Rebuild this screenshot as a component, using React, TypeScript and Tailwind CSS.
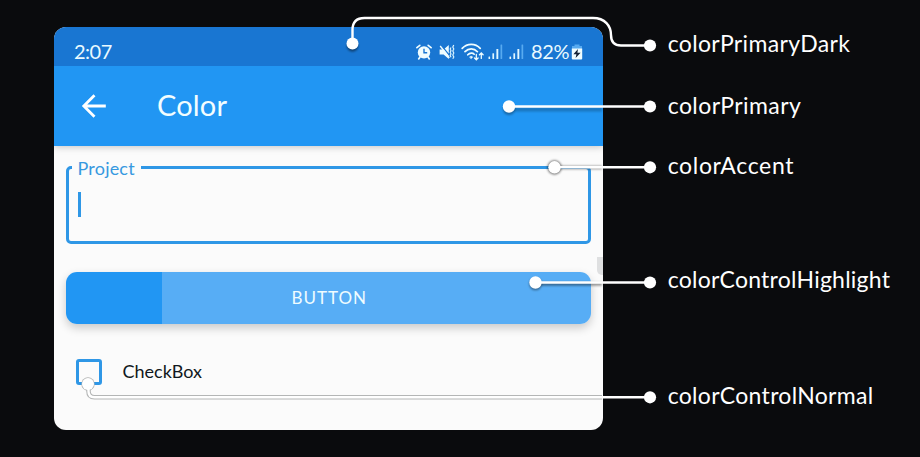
import React from "react";

const labels = [
  { text: "colorPrimaryDark", className: "mt-7 tracking-[0.35px]" },
  { text: "colorPrimary", className: "mt-[31.6px] tracking-[0.42px]" },
  { text: "colorAccent", className: "mt-[30.6px] tracking-[0.65px]" },
  { text: "colorControlHighlight", className: "mt-[83.8px] tracking-[0.24px]" },
  { text: "colorControlNormal", className: "mt-[85.6px] tracking-[0.3px]" },
];

function AlarmIcon() {
  return (
    <svg className="h-4 w-4 shrink-0" viewBox="0 0 16 16" fill="none" stroke="#eefcff">
      <circle cx="8" cy="8.4" r="6.2" fill="#eefcff" stroke="none" />
      <path d="M.9 3.6 3.8 1.3M15.1 3.6 12.2 1.3M4 13l-1.3 1.9M12 13l1.3 1.9" strokeWidth="1.7" strokeLinecap="round" />
      <path d="M8 4.8v4h3.2" stroke="#1976d2" strokeWidth="1.4" />
    </svg>
  );
}

function MuteIcon() {
  return (
    <svg className="ml-[7px] h-4 w-4 shrink-0" viewBox="0 0 16 16" fill="none">
      <path d="M.6 5.4h4L9.8 1v14L4.6 10.6h-4z" fill="#eefcff" />
      <path d="M2.4 1.4 11 12" stroke="#1976d2" strokeWidth="1.2" />
      <path d="M1.2 2 10.4 13.9" stroke="#eefcff" strokeWidth="1.4" />
      <path d="m12 3.4-.8 1.6.8 1.7-.8 1.6.8 1.7-.8 1.6.8 1.6M14.8 1l-1 2 1 2-1 2 1 2-1 2 1 2-1 1.7" stroke="#d9f3ff" strokeWidth="1.2" />
    </svg>
  );
}

function WifiIcon() {
  return (
    <svg className="ml-[6px] h-[18px] w-[23px] shrink-0" viewBox="0 0 23 18" fill="none" stroke="#eefcff" strokeLinecap="round">
      <path d="M1.2 5.4c5-5.3 13.2-5.3 18 0M4 8.7c3.5-3.8 9-3.8 12.4 0M6.8 11.8c2-2.2 5-2.2 6.4-.6" strokeWidth="1.7" />
      <path d="M8.8 13.9c.9-.8 1.9-.8 2.8 0l-1.2 1.5z" fill="#eefcff" strokeWidth=".7" />
      <path d="M15.3 11.4v5.4M13.5 15l1.8 1.8 1.8-1.8M20.3 15.4V10M18.5 11.8l1.8-1.8 1.8 1.8" strokeWidth="1.3" />
    </svg>
  );
}

function SignalIcon({ className }: { className: string }) {
  return (
    <svg className={`h-4 w-[15px] shrink-0 ${className}`} viewBox="0 0 15 16" fill="#e2f7ff">
      <rect x=".5" y="12.4" width="1.6" height="2.6" rx=".5" />
      <rect x="4.4" y="9.3" width="1.7" height="5.7" rx=".5" />
      <rect x="8.4" y="5" width="1.9" height="10" rx=".5" />
      <rect x="12.5" y=".6" width="1.7" height="14.4" rx=".5" fill="#57aaf0" />
    </svg>
  );
}

function BatteryIcon() {
  return (
    <svg className="ml-[2px] h-4 w-3 shrink-0" viewBox="0 0 12 16">
      <path d="M3.5.4h5V2H11v4H1V2h2.5z" fill="#57aaf0" />
      <path d="M.8 4.4h10.4v10.1a1 1 0 0 1-1 1H1.8a1 1 0 0 1-1-1z" fill="#eefcff" />
      <path d="M7 5 2.4 10.2h3L4.6 14l5-5.2H6.4z" fill="#152235" />
    </svg>
  );
}

function Connectors() {
  return (
    <svg className="pointer-events-none absolute inset-0 z-20" width="920" height="457" viewBox="0 0 920 457" fill="none">
      <defs>
        <filter id="soft" x="0" y="0" width="920" height="457" filterUnits="userSpaceOnUse">
          <feGaussianBlur stdDeviation="1.2" />
        </filter>
      </defs>
      <g filter="url(#soft)">
        <path d="M513 109.5H602" stroke="#000" strokeOpacity=".22" strokeWidth="4" />
        <circle cx="352.5" cy="46" r="5.8" fill="#000" fillOpacity=".45" />
        <circle cx="509" cy="109" r="6" fill="#000" fillOpacity=".32" />
        <path d="M555 167.5H602M536 284H602" stroke="#000" strokeOpacity=".4" strokeWidth="3.5" />
        <circle cx="554.5" cy="167.5" r="7.2" fill="#000" fillOpacity=".5" />
        <circle cx="535.5" cy="284" r="6.3" fill="#000" fillOpacity=".4" />
      </g>
      <path d="M88.5 390v1.3q0 6 6 6H602" stroke="#b4b6b6" strokeWidth="4.6" />
      <circle cx="88" cy="384" r="6.7" fill="#b0b2b2" />
      <g stroke="#fff" strokeWidth="2.4">
        <path d="M352.5 43V30q0-12 12-12H593C605 18 611 26 611 35C611 42 614 45.5 621 45.5H650" />
        <path d="M509 106.5H650M555 167.3H650M536 282.5H650" />
        <path d="M88.5 386v5.3q0 6 6 6H650" />
      </g>
      <g fill="#fff">
        <circle cx="352.5" cy="43.5" r="6" />
        <circle cx="509" cy="106.5" r="6.2" />
        <circle cx="554.5" cy="167.3" r="6.2" />
        <circle cx="535.5" cy="282.5" r="6.2" />
        <circle cx="88" cy="384" r="6" />
        <circle cx="650" cy="45.5" r="6.1" />
        <circle cx="650" cy="106.5" r="6.1" />
        <circle cx="650" cy="167.3" r="6.1" />
        <circle cx="650" cy="282.5" r="6.1" />
        <circle cx="650" cy="397.3" r="6.1" />
      </g>
    </svg>
  );
}

export default function App() {
  return (
    <div className="relative flex h-[457px] w-[920px] overflow-hidden bg-[#0a0b0d] font-['Lato',sans-serif]">
      <div className="mt-[27px] ml-[54px] flex h-[403px] w-[548.5px] shrink-0 flex-col overflow-hidden rounded-[12px] bg-[#fbfbfb]">
        <div className="z-10 flex h-[39px] shrink-0 items-center bg-[#1976d2] pt-[11px] pr-[19.5px] pl-5 text-[20px] leading-6 text-[#eafaff]">
          <span className="-mt-[2px] tracking-[-0.5px]">2:07</span>
          <div className="ml-auto flex items-center">
            <AlarmIcon />
            <MuteIcon />
            <WifiIcon />
            <SignalIcon className="ml-1" />
            <SignalIcon className="ml-[6px]" />
            <span className="-mt-[2px] ml-[7px] w-[38px] tracking-[-0.4px] whitespace-nowrap">82%</span>
            <BatteryIcon />
          </div>
        </div>

        <div className="flex h-20 shrink-0 items-center bg-[#2196f3] pl-[27px] text-white shadow-[0_1px_7px_rgba(0,0,0,0.22)]">
          <svg className="h-6 w-[26px]" viewBox="0 0 26 24" fill="none" stroke="#fff" strokeWidth="2.8">
            <path d="M24.8 12H3.5M13.5 1.3 2.8 12l10.7 10.7" />
          </svg>
          <span className="-mt-[3px] ml-[50px] text-[29px] leading-9 tracking-[0.15px] text-[#f2fdff]">Color</span>
        </div>

        <fieldset className="mt-[11px] ml-[11.5px] h-[87px] w-[525.5px] shrink-0 rounded-[5px] border-[3px] border-[#2f97e6] pl-[3px]">
          <legend className="ml-0 h-5 w-[69px] pl-[6px] text-[18px] leading-[22px] tracking-[0.2px] whitespace-nowrap text-[#3799e0]">Project</legend>
          <div className="mt-[15px] ml-[6px] h-[25px] w-[3px] bg-[#2f97e6]" />
        </fieldset>

        <div className="mt-7 ml-[11.5px] flex h-[52px] w-[525.5px] shrink-0 items-center justify-center rounded-[11px] bg-[linear-gradient(to_right,#2196f3_96.5px,#57adf5_96.5px)] pl-[2px] text-[17px] tracking-[1px] text-[#effcff] shadow-[0_4px_10px_rgba(0,0,0,0.2)]">
          BUTTON
        </div>

        <div className="mt-[35px] ml-[21.5px] flex h-[26px] shrink-0 items-center">
          <div className="h-[26px] w-[26px] rounded-[3px] border-[3px] border-[#2f97e6]" />
          <span className="-mt-[2px] ml-[21px] text-[18px] leading-6 text-[#111820]">CheckBox</span>
        </div>
      </div>

      <div className="flex flex-col pl-[65.2px] text-[23px] text-white">
        {labels.map(({ text, className }) => (
          <span key={text} className={`h-[30px] w-max shrink-0 leading-[30px] ${className}`}>
            {text}
          </span>
        ))}
      </div>

      <div className="absolute top-[257px] left-[597px] h-[18px] w-[5.5px] rounded-bl-[5px] bg-[#dfe0e1]" />
      <Connectors />
    </div>
  );
}
